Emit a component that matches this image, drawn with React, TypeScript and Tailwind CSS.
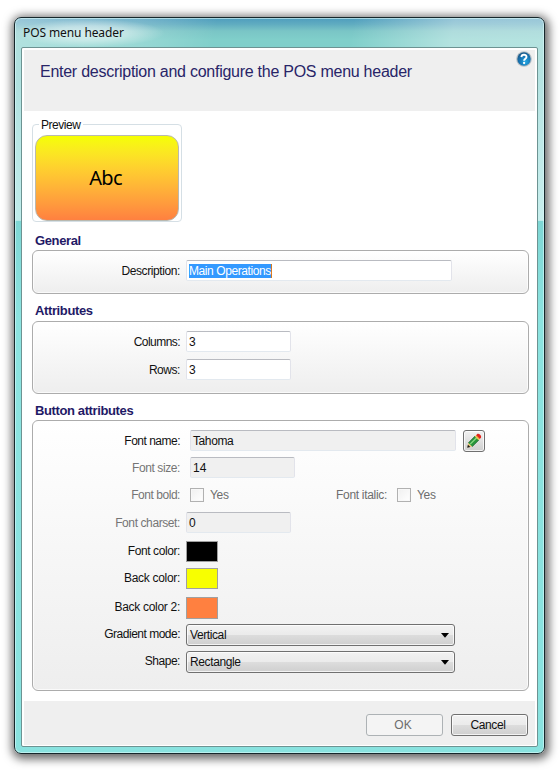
import type { ReactNode } from "react";

const inputBase =
  "flex items-center rounded-[2px] border border-[#e2e3ea] border-t-[#b9bbc1] border-b-[#e3e9ef] pl-[2px] text-[#111111]";

function Heading({ className, children }: { className: string; children: ReactNode }) {
  return (
    <h2 className={`ml-[3px] h-[16px] whitespace-nowrap text-[13px] leading-[16px] font-bold tracking-[-0.38px] text-[#1f1a66] ${className}`}>
      {children}
    </h2>
  );
}

function Panel({ className, children }: { className: string; children: ReactNode }) {
  return (
    <section
      className={`w-[497px] rounded-[6px] border border-[#acacac] bg-gradient-to-b from-white to-[#eeeeee] shadow-[inset_0_0_0_1px_rgba(255,255,255,0.7)] ${className}`}
    >
      {children}
    </section>
  );
}

function Row({
  label,
  className,
  labelClass = "",
  dim = false,
  children,
}: {
  label: string;
  className: string;
  labelClass?: string;
  dim?: boolean;
  children: ReactNode;
}) {
  return (
    <div className={`flex ${className}`}>
      <div
        className={`mr-[6px] flex w-[147px] shrink-0 items-center justify-end whitespace-nowrap ${
          dim ? "text-[#757575]" : "text-[#111111]"
        }`}
      >
        <span className={labelClass}>{label}</span>
      </div>
      {children}
    </div>
  );
}

function Check() {
  return (
    <span className="h-[14px] w-[14px] border border-[#b1b1b1] bg-gradient-to-br from-[#f0f0f0] to-white shadow-[inset_0_0_0_1px_#f8f8f8]" />
  );
}

function Select({ value, className }: { value: string; className: string }) {
  return (
    <div className="flex h-[22px] w-[269px] items-center justify-between rounded-[3px] border border-[#707070] bg-[linear-gradient(#f2f2f2,#ebebeb_50%,#dddddd_50%,#cfcfcf)] pr-[5px] pl-[3px] text-[#111111] shadow-[inset_0_0_0_1px_rgba(255,255,255,0.75)]">
      <span className={className}>{value}</span>
      <svg width="8" height="5" viewBox="0 0 8 5">
        <path d="M0 0h8L4 4.8z" fill="#000" />
      </svg>
    </div>
  );
}

function Pencil() {
  return (
    <svg width="16" height="16" viewBox="0 0 16 16" className="shrink-0">
      <path d="M1.4 14.4 2.4 9.7 6.3 13.5z" fill="#f0c878" />
      <path d="M1.2 14.8 1.9 11.8 4.3 14.1z" fill="#181818" />
      <path d="M2.4 9.9 9.2 3 13 6.8 6.2 13.6z" fill="#27963a" />
      <path d="M4.2 11.1 10.6 4.7" stroke="#8bd984" strokeWidth="1.3" />
      <path d="M2.4 9.9 9.2 3M6.2 13.6 13 6.8" stroke="#11602a" strokeWidth="0.8" />
      <path d="M8.8 3.4 10.3 1.9 14.1 5.7 12.6 7.2z" fill="#e9c14f" />
      <path d="M10.1 2.2 11.2 1C12.8-.1 15.9 2.7 15 4.6L13.9 5.9z" fill="#e4251b" />
    </svg>
  );
}

function Help() {
  return (
    <svg width="16" height="16" viewBox="0 0 16 16">
      <defs>
        <radialGradient id="help" cx="0.6" cy="0.7" r="0.7">
          <stop offset="0" stopColor="#22a8e4" />
          <stop offset="0.6" stopColor="#1775b4" />
          <stop offset="1" stopColor="#195888" />
        </radialGradient>
      </defs>
      <circle cx="8" cy="8" r="7.8" fill="#b5bfc5" />
      <circle cx="8" cy="8" r="6.7" fill="url(#help)" />
      <path d="M5.4 6.1C5.5 2.8 10.6 3 10.5 6 10.4 7.8 8.1 7.7 8.1 9.7" fill="none" stroke="#fff" strokeWidth="1.9" />
      <circle cx="8.1" cy="12" r="1.15" fill="#fff" />
    </svg>
  );
}

export default function App() {
  return (
    <div className="h-[771px] w-[560px] overflow-hidden bg-white pt-[17px] pl-[14px] font-['Liberation_Sans',Arial,sans-serif] text-[12px] leading-[14px]">
      <main className="h-[737px] w-[531px] rounded-[7px] border border-[#16272b] bg-[linear-gradient(100deg,rgba(255,255,255,0.4)_0%,rgba(255,255,255,0.2)_22%,transparent_36%,transparent_60%,rgba(255,255,255,0.4)_78%,rgba(255,255,255,0.42)_100%),linear-gradient(#4f9dbd_0px,#5fabc0_6px,#7ac5c6_13px,#80cfca_22px,#80cfcd_60px,#90d9d7_120px,#a0e3e1_202px,#7ed6d4_203px,#8ce3e0_300px,#89e2df_100%)] bg-no-repeat [background-size:100%_203px,100%_100%] px-[6px] pb-[6px] shadow-[inset_0_0_0_1px_rgba(220,250,250,0.6),1px_2px_10px_3px_rgba(0,0,0,0.6)]">
        <header className="flex h-[29px] items-center">
          <h1 className="ml-[-6px] h-[28px] w-[150px] bg-[radial-gradient(closest-side,rgba(255,255,255,0.55),rgba(255,255,255,0.4)_50%,transparent)] pl-[8px] font-['Noto_Sans',sans-serif] text-[12px] leading-[28px] tracking-[-0.1px] whitespace-nowrap text-[#111111]">
            POS menu header
          </h1>
        </header>

        <div className="h-[700px] w-[517px] rounded-[2px] border border-[#6d9392] bg-white px-[2px] pt-[2px] pb-px">
          <div className="flex h-[61px] justify-between bg-[#efefef] pl-[16px]">
            <p className="mt-[13px] text-[16px] leading-[18px] tracking-[-0.26px] whitespace-nowrap text-[#282568]">
              Enter description and configure the POS menu header
            </p>
            <div className="mt-[1px] mr-[3px]">
              <Help />
            </div>
          </div>

          <div className="h-[590px] pt-[13px] pl-[8px]">
            <fieldset className="relative h-[98px] w-[150px] rounded-[4px] border border-[#d5dfe5] px-[2px] pt-[10px]">
              <span className="absolute top-[-7px] left-[6px] bg-white px-[2px] tracking-[-0.45px] text-[#111111]">Preview</span>
              <div className="flex h-[86px] w-[144px] items-center justify-center rounded-[12px] border border-[#b9b9b0] bg-gradient-to-b from-[#f5ff00] to-[#ff8040] pr-[3px] font-['Noto_Sans',sans-serif] text-[20px] tracking-[-0.7px] text-black">
                Abc
              </div>
            </fieldset>

            <Heading className="mt-[11px]">General</Heading>
            <Panel className="mt-px h-[44px] pt-[9px]">
              <Row label="Description:" className="h-[21px]" labelClass="tracking-[-0.4px]">
                <div className={`${inputBase} w-[266px] bg-white`}>
                  <span className="h-[14px] border-r border-[#d97b20] bg-[#3399ff] tracking-[-0.42px] text-white">
                    Main Operations
                  </span>
                </div>
              </Row>
            </Panel>

            <Heading className="mt-[9px]">Attributes</Heading>
            <Panel className="mt-[2px] h-[73px] pt-[9px]">
              <Row label="Columns:" className="h-[21px]" labelClass="tracking-[-0.55px]">
                <div className={`${inputBase} w-[105px] bg-white`}>3</div>
              </Row>
              <Row label="Rows:" className="mt-[7px] h-[21px]" labelClass="tracking-[-0.45px]">
                <div className={`${inputBase} w-[105px] bg-white`}>3</div>
              </Row>
            </Panel>

            <Heading className="mt-[9px]">Button attributes</Heading>
            <Panel className="mt-px h-[271px] pt-[9px]">
              <Row label="Font name:" className="h-[22px]" labelClass="tracking-[-0.5px]">
                <div className={`${inputBase} ml-[4px] h-[21px] w-[266px] bg-[#f0f0f0]`}>
                  <span className="tracking-[-0.4px]">Tahoma</span>
                </div>
                <button className="ml-[7px] flex h-[22px] w-[22px] items-center justify-center rounded-[3px] border border-[#707070] bg-gradient-to-b from-[#f2f2f2] to-[#cfcfcf] shadow-[inset_0_0_0_1px_rgba(255,255,255,0.75)]">
                  <Pencil />
                </button>
              </Row>
              <Row label="Font size:" className="mt-[5px] h-[21px]" labelClass="tracking-[-0.4px]" dim>
                <div className={`${inputBase} ml-[4px] w-[105px] bg-[#f0f0f0]`}>14</div>
              </Row>
              <Row label="Font bold:" className="mt-[10px] h-[14px] items-center" labelClass="tracking-[-0.45px]" dim>
                <div className="ml-[4px] flex items-center text-[#6d6d6d]">
                  <Check />
                  <span className="ml-[6px] w-[126px] tracking-[-0.3px]">Yes</span>
                  <span className="w-[50px] text-right tracking-[-0.3px] whitespace-nowrap">Font italic:</span>
                  <span className="ml-[11px] flex">
                    <Check />
                  </span>
                  <span className="ml-[6px] tracking-[-0.3px]">Yes</span>
                </div>
              </Row>
              <Row label="Font charset:" className="mt-[10px] h-[21px]" labelClass="tracking-[-0.4px]" dim>
                <div className={`${inputBase} w-[105px] bg-[#f0f0f0]`}>0</div>
              </Row>
              <Row label="Font color:" className="mt-[8px] h-[21px]" labelClass="relative top-[-1px] tracking-[-0.4px]">
                <div className="w-[32px] border border-[#a0a0a0] bg-black" />
              </Row>
              <Row label="Back color:" className="mt-[6px] h-[21px]" labelClass="relative top-[-1px] tracking-[-0.3px]">
                <div className="w-[32px] border border-[#a0a0a0] bg-[#f8ff00]" />
              </Row>
              <Row label="Back color 2:" className="mt-[8px] h-[22px]" labelClass="relative top-[-1px] tracking-[-0.3px]">
                <div className="w-[32px] border border-[#a0a0a0] bg-[#ff8040]" />
              </Row>
              <Row label="Gradient mode:" className="mt-[5px] h-[22px]" labelClass="relative top-[-1px] tracking-[-0.5px]">
                <Select value="Vertical" className="tracking-[-0.4px]" />
              </Row>
              <Row label="Shape:" className="mt-[5px] h-[22px]" labelClass="relative top-[-1px] tracking-[-0.45px]">
                <Select value="Rectangle" className="tracking-[-0.38px]" />
              </Row>
            </Panel>
          </div>

          <footer className="flex h-[44px] justify-end bg-[#efefef] pt-[13px] pr-[7px]">
            <button className="h-[22px] w-[77px] rounded-[3px] border border-[#adb2b5] bg-[#f4f4f4] pr-[3px] text-[#6d6d6d]">OK</button>
            <button className="ml-[8px] h-[22px] w-[77px] rounded-[3px] border border-[#707070] bg-[linear-gradient(#f2f2f2,#ebebeb_50%,#dddddd_50%,#cfcfcf)] pr-[3px] tracking-[-0.4px] text-[#111111] shadow-[inset_0_0_0_1px_rgba(255,255,255,0.75)]">
              Cancel
            </button>
          </footer>
        </div>
      </main>
    </div>
  );
}
